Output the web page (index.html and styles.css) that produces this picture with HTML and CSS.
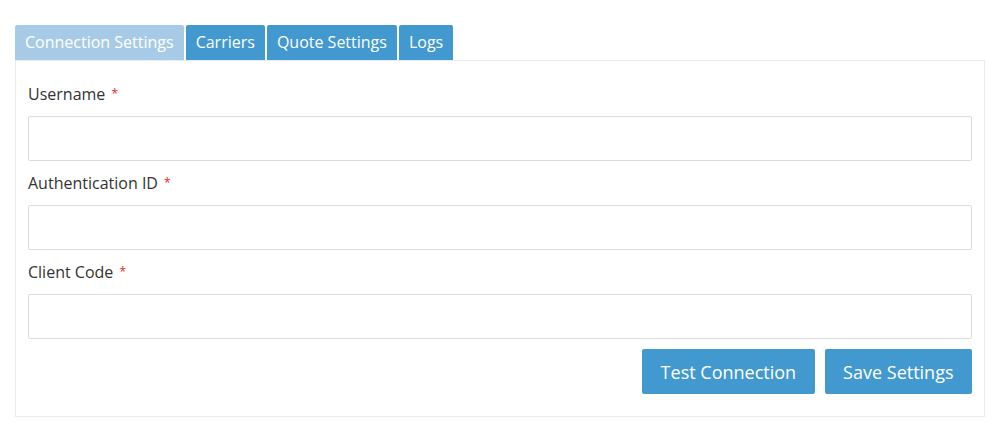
FILE: index.html
```html
<!DOCTYPE html>
<html>
<head>
<meta charset="utf-8">
<link rel="stylesheet" href="styles.css">
</head>
<body>
<div class="wrap">
  <div class="tabs">
    <div class="tab active">Connection Settings</div>
    <div class="tab">Carriers</div>
    <div class="tab">Quote Settings</div>
    <div class="tab">Logs</div>
  </div>
  <div class="panel">
    <div class="field">
      <label class="label">Username <span class="req">*</span></label>
      <input class="input" type="text">
    </div>
    <div class="field">
      <label class="label">Authentication ID <span class="req">*</span></label>
      <input class="input" type="text">
    </div>
    <div class="field">
      <label class="label">Client Code <span class="req">*</span></label>
      <input class="input" type="text">
    </div>
    <div class="actions">
      <button class="btn btn-test">Test Connection</button>
      <button class="btn btn-save">Save Settings</button>
    </div>
  </div>
</div>
</body>
</html>
```
FILE: styles.css
```css
html, body {
  margin: 0;
  padding: 0;
  background: #ffffff;
  font-family: "Open Sans", "Liberation Sans", sans-serif;
}
.wrap {
  padding: 25px 15px 0 15px;
  width: 970px;
}
.tabs {
  display: flex;
  gap: 2px;
  height: 35px;
}
.tab {
  background: #4299d0;
  color: #ffffff;
  font-size: 16px;
  line-height: 35px;
  padding: 0 10px;
  border-radius: 2px 2px 0 0;
}
.tab.active {
  background: #a7cbe6;
}
.panel {
  border: 1px solid #ebebeb;
  padding: 21px 12px 22px 12px;
  display: flex;
  flex-direction: column;
}
.field {
  display: flex;
  flex-direction: column;
}
.field + .field {
  margin-top: 10px;
}
.label {
  font-size: 16px;
  line-height: 24px;
  color: #333333;
  margin-bottom: 10px;
}
.req {
  color: #f02020;
  font-size: 12px;
  margin-left: 2px;
  vertical-align: 2px;
}
.input {
  height: 45px;
  box-sizing: border-box;
  border: 1px solid #dcdcdc;
  border-radius: 2px;
  margin: 0;
  padding: 0 10px;
  font-size: 15px;
}
.actions {
  display: flex;
  justify-content: flex-end;
  gap: 10px;
  margin-top: 10px;
}
.btn {
  height: 45px;
  box-sizing: border-box;
  background: #4299d0;
  color: #ffffff;
  border: none;
  border-radius: 2px;
  font-family: "Open Sans", "Liberation Sans", sans-serif;
  font-size: 18px;
  padding: 0 18.5px;
}
```
